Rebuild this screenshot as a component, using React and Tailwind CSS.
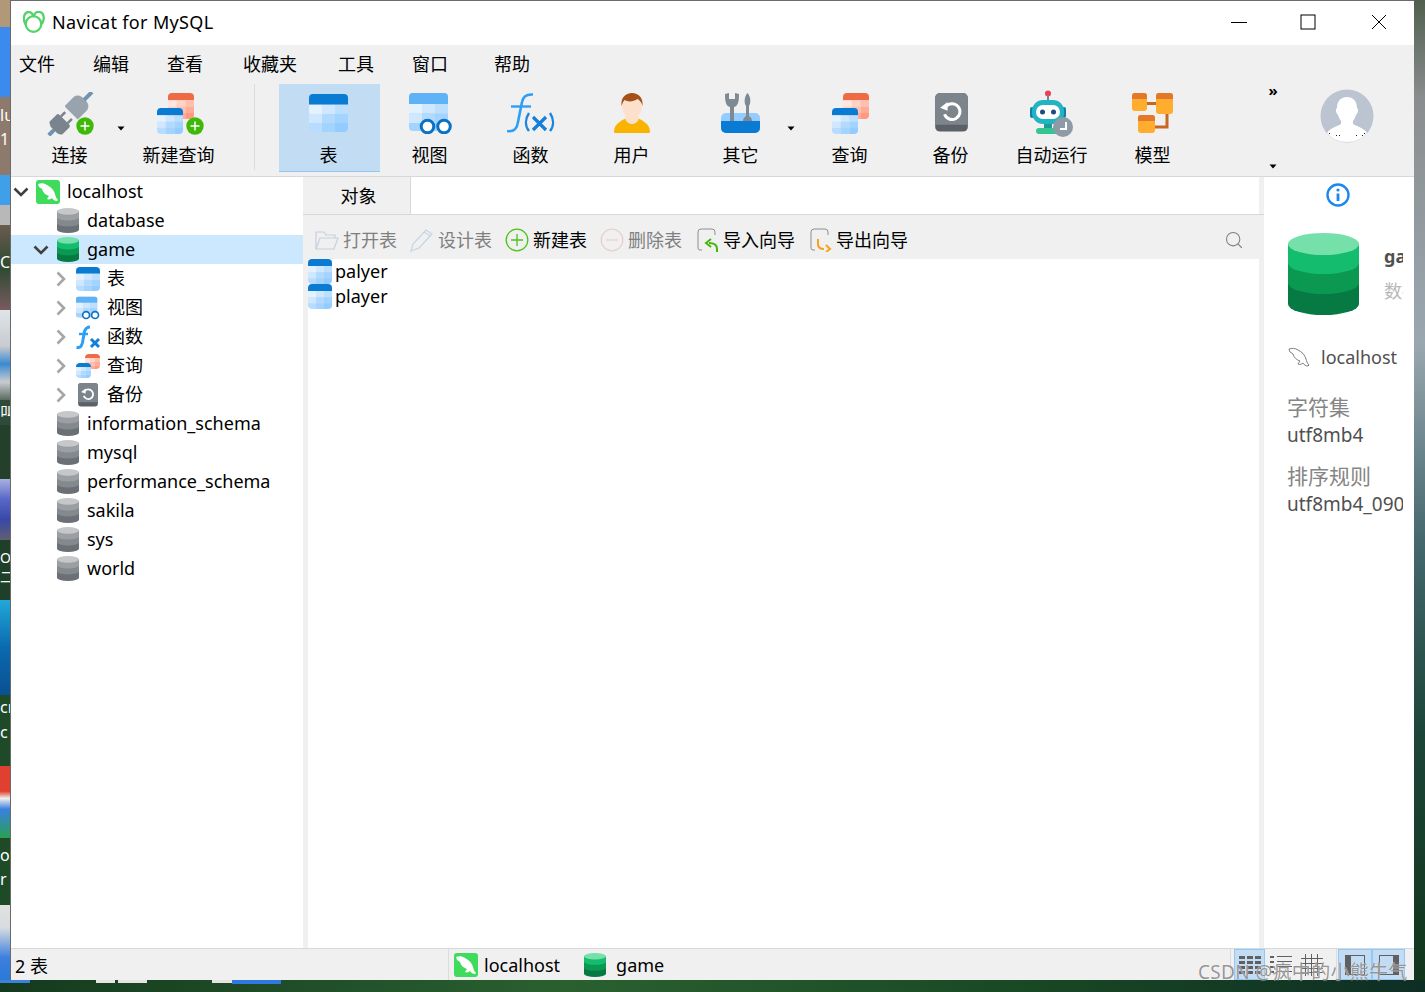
import { Search } from 'lucide-react';

const BLUE = {
  head: '#0a7bd3',
  cells: ['#e4f2ff', '#cfe7ff', '#bcdfff', '#cfe7ff', '#b2dafF', '#a3d3ff', '#b8dcff', '#a3d3ff', '#94ccff'],
};
const RED = {
  head: '#ee6b45',
  cells: ['#ffe6df', '#ffd2c6', '#ffbfae', '#ffd2c6', '#ffbfae', '#ffac96', '#ffbfae', '#ffac96', '#ff9a80'],
};

function TableIcon({ w = 39, h = 38, scheme = BLUE, className = '' }) {
  return (
    <svg width={w} height={h} viewBox="0 0 39 39" preserveAspectRatio="none" className={`rounded-[4px] shrink-0 ${className}`}>
      <rect width="39" height="11" fill={scheme.head} />
      {scheme.cells.map((c, i) => (
        <rect key={i} x={(i % 3) * 13} y={11 + Math.floor(i / 3) * 9.4} width="13.2" height="9.6" fill={c} />
      ))}
    </svg>
  );
}

function PlusBadge({ className = '' }) {
  return (
    <svg width="18" height="18" viewBox="0 0 18 18" className={className}>
      <circle cx="9" cy="9" r="8.7" fill="#3fb80a" />
      <path d="M9 4.5v9M4.5 9h9" stroke="#fff" strokeWidth="1.5" />
    </svg>
  );
}

function PlugIcon() {
  return (
    <svg width="48" height="44" viewBox="0 0 48 44" className="mt-[8px] ml-[2px]">
      <g transform="translate(23 22) rotate(-45)">
        <path d="M-30 -2h11v4h-11z" fill="#6f93b0" />
        <path d="M-20 -9h10a2 2 0 0 1 2 2v14a2 2 0 0 1 -2 2h-10a8 8 0 0 1 -2 -9a8 8 0 0 1 2 -9z" fill="#7a848e" />
        <path d="M-8 -6h6v2.5h-6zM-8 3.5h6v2.500h-6z" fill="#7a848e" />
        <path d="M3 -9.500h12a7 7 0 0 1 5 9.500a7 7 0 0 1 -5 9.500h-12a1.500 1.500 0 0 1 -1.500 -1.500v-16a1.500 1.500 0 0 1 1.500 -1.500z" fill="#99a3ad" />
        <path d="M20 -2h11v4h-11z" fill="#6f93b0" />
      </g>
      <circle cx="38" cy="34" r="8.700" fill="#3fb80a" />
      <path d="M38 29.500v9M33.500 34h9" stroke="#fff" strokeWidth="1.500" />
    </svg>
  );
}

function QueryIcon({ plus }) {
  return (
    <div className={`relative h-[41px] mt-[9px] ${plus ? 'w-[43px]' : 'w-[38px] ml-[3px]'}`}>
      <TableIcon w={26} h={26} scheme={RED} className="absolute left-[11px] top-0" />
      <TableIcon w={26} h={26} className="absolute left-0 top-[15px]" />
      {plus && <PlusBadge className="absolute left-[29px] top-[24px]" />}
    </div>
  );
}

function ViewIcon({ w = 44, h = 41, className = 'mt-[9px] ml-[3px]' }) {
  return (
    <svg width={w} height={h} viewBox="0 0 44 41" className={className}>
      <rect width="39" height="38" rx="4" fill="#a3d3ff" />
      <path d="M0 4a4 4 0 0 1 4 -4h31a4 4 0 0 1 4 4v7h-39z" fill="#5fb2f5" />
      <rect y="11" width="13" height="9.500" fill="#e4f2ff" />
      <rect x="13" y="11" width="13" height="9.500" fill="#cfe7ff" />
      <rect x="26" y="11" width="13" height="9.500" fill="#bcdfff" />
      <rect y="20.500" width="13" height="9.500" fill="#cfe7ff" />
      <rect x="13" y="20.500" width="13" height="9.500" fill="#b2daff" />
      <circle cx="18.500" cy="33.500" r="6.300" fill="#fff" stroke="#0a72c6" strokeWidth="3" />
      <circle cx="35" cy="33.500" r="6.300" fill="#fff" stroke="#0a72c6" strokeWidth="3" />
    </svg>
  );
}

function FuncIcon() {
  return (
    <svg width="48" height="40" viewBox="0 0 48 40" className="mt-[9px]">
      <path d="M0 38c7 1 10 -2 11 -9l4 -20c1 -6 5 -8 11 -7.500" fill="none" stroke="#2b9ff5" strokeWidth="2.600" />
      <path d="M4 13.500h20" stroke="#2b9ff5" strokeWidth="2.400" />
      <path d="M22 20c-4 6 -4 13 0 18M43 20c4 6 4 13 0 18" fill="none" stroke="#1a86e0" strokeWidth="2.400" />
      <path d="M26 24l13 13M39 24l-13 13" stroke="#1080dc" strokeWidth="3.200" />
    </svg>
  );
}

function UserIcon() {
  return (
    <svg width="38" height="41" viewBox="0 0 38 41" className="mt-[9px]">
      <path d="M1 39c0 -8 7 -11 12 -14h12c5 3 12 6 12 14a1 1 0 0 1 -1 1h-34a1 1 0 0 1 -1 -1z" fill="#f8b400" />
      <path d="M19 31c-4 0 -7 -3 -7 -7l1 -4h12l1 4c0 4 -3 7 -7 7z" fill="#fde0cb" />
      <ellipse cx="19" cy="13" rx="10" ry="12" fill="#fde0cb" />
      <path d="M8.500 13c-1 -8 4 -13 10.500 -13s11.500 5 10.500 13c-1 -4 -3 -6 -5 -7c-4 3 -10 3 -13 1c-1 1 -2 3 -3 6z" fill="#a5521a" />
    </svg>
  );
}

function ToolboxIcon() {
  return (
    <svg width="40" height="41" viewBox="0 0 40 41" className="mt-[9px]">
      <rect y="20" width="39" height="20" rx="5" fill="#94ccff" />
      <path d="M0 28h39v7a5 5 0 0 1 -5 5h-29a5 5 0 0 1 -5 -5z" fill="#0a7bd3" />
      <path d="M9 28v-14c-4 -1 -5 -5 -5 -13l4 -1v6h6v-6l4 1c0 8 -1 12 -5 13v14z" fill="#7d8993" />
      <path d="M22 28c0 -3 2 -4 3 -5v-10c-2 -3 -2 -9 1.500 -13c3.500 4 3.500 10 1.500 13v10c1 1 3 2 3 5z" fill="#7d8993" />
    </svg>
  );
}

function BackupIcon({ size = 33, className = 'mt-[9px] ml-[2px]' }) {
  return (
    <svg width={size} height={size * 1.2} viewBox="0 0 33 40" className={className}>
      <rect width="33" height="39" rx="5" fill="#5b6167" />
      <path d="M5 0h23a5 5 0 0 1 5 5v27h-33v-27a5 5 0 0 1 5 -5z" fill="#7c858c" />
      <path d="M11 13.500a8 8 0 1 1 -1.500 8" fill="none" stroke="#fff" strokeWidth="3" />
      <path d="M5 15l7.500 -6v9z" fill="#fff" />
    </svg>
  );
}

function RobotIcon() {
  return (
    <svg width="46" height="48" viewBox="0 0 46 48" className="mt-[6px] ml-[1px]">
      <circle cx="19" cy="3.500" r="3" fill="#ef3e56" />
      <rect x="18" y="5" width="2" height="6" fill="#6f8796" />
      <rect x="1" y="17" width="4" height="11" rx="2" fill="#1180a8" />
      <rect x="33" y="17" width="4" height="11" rx="2" fill="#1180a8" />
      <rect x="3" y="10" width="32" height="24" rx="11" fill="#23b4c4" />
      <rect x="7" y="15" width="24" height="14" rx="7" fill="#fff" />
      <circle cx="13.500" cy="22" r="2.500" fill="#1c4a86" />
      <circle cx="24.500" cy="22" r="2.500" fill="#1c4a86" />
      <rect x="15" y="34" width="8" height="4" fill="#1c9d94" />
      <rect x="7" y="38" width="26" height="6" rx="3" fill="#33c690" />
      <circle cx="34" cy="37" r="10" fill="#8e9aa6" />
      <path d="M37 32v7h-6" fill="none" stroke="#fff" strokeWidth="2" />
    </svg>
  );
}

function ModelIcon() {
  const box = (x, y, w, h) => (
    <g>
      <rect x={x} y={y} width={w} height={h} rx="3" fill="#ffad2e" />
      <path d={`M${x} ${y + 6}v-3a3 3 0 0 1 3 -3h${w - 6}a3 3 0 0 1 3 3v3z`} fill="#e3772a" />
    </g>
  );
  return (
    <svg width="42" height="41" viewBox="0 0 42 41" className="mt-[9px]">
      <path d="M15 10.500h10M35 20v14h-12" fill="none" stroke="#c9661f" strokeWidth="3" />
      {box(0, 0, 15, 18)}
      {box(24, 0, 17, 21)}
      {box(6, 22, 17, 18)}
    </svg>
  );
}

function Avatar() {
  return (
    <svg width="54" height="54" viewBox="0 0 54 54">
      <circle cx="27" cy="27" r="26.500" fill="#bcc4d1" />
      <path d="M27 8c7 0 10 5 10 11c2 1 1 5 -1 7c-1 3 -2 5 -3 6v3c5 3 11 4 14 9c-5 6 -12 9 -20 9s-15 -3 -20 -9c3 -5 9 -6 14 -9v-3c-1 -1 -2 -3 -3 -6c-2 -2 -3 -6 -1 -7c0 -6 3 -11 10 -11z" fill="#fff" />
      <path d="M9 44h1v1h-1zM16 46h1v1h-1zM19 46h1v1h-1zM36 46h1v1h-1zM42 46h1v1h-1zM44 44h1v1h-1z" fill="#222" />
    </svg>
  );
}

function Caret({ className = '' }) {
  return (
    <svg width="8" height="5" viewBox="0 0 8 5" className={className}>
      <path d="M0.500 0.500h7l-3.500 4z" fill="#000" />
    </svg>
  );
}

function Cylinder({ w = 22, h = 25, green = false, className = '' }) {
  const c = green
    ? ['#067a42', '#0b9850', '#14bd6e', '#76e0aa']
    : ['#6b7076', '#84898e', '#9b9fa3', '#c5c7c9'];
  return (
    <svg width={w} height={h} viewBox="0 0 71 82" preserveAspectRatio="none" className={`shrink-0 ${className}`}>
      <path d="M0 11v60a35.500 11 0 0 0 71 0v-60z" fill={c[0]} />
      <path d="M0 11v39a35.500 11 0 0 0 71 0v-39z" fill={c[1]} />
      <path d="M0 11v19a35.500 11 0 0 0 71 0v-19z" fill={c[2]} />
      <ellipse cx="35.500" cy="11" rx="35.500" ry="11" fill={c[3]} />
    </svg>
  );
}

const DOLPHIN = 'M2 4c3 -1 6 -1 9 1c4 2 7 5 8 9c0.500 2 1 4 3 6l-1 1c-2 0 -4 -1 -5 -3c-1 1 -3 2 -5 1l2 -3c-3 -1 -6 -3 -7 -7l-3 -2z';

function MysqlIcon() {
  return (
    <svg width="24" height="24" viewBox="0 0 24 24" className="rounded-[3px] shrink-0 bg-[#3fdb5c]">
      <path d={DOLPHIN} fill="#fff" />
    </svg>
  );
}

function TinyFx() {
  return (
    <svg width="24" height="24" viewBox="0 0 24 24" className="shrink-0">
      <path d="M0.500 22.500c4 0.500 5 -1 6 -5l2 -11c1 -3 2 -4.500 5.500 -4.500" fill="none" stroke="#2b9ff5" strokeWidth="3" />
      <path d="M3 9h9" stroke="#2b9ff5" strokeWidth="2.400" />
      <path d="M15 14l8 8M23 14l-8 8" stroke="#1080dc" strokeWidth="3" />
    </svg>
  );
}

function TinyView() {
  return <ViewIcon w={24} h={24} className="shrink-0" />;
}

function TinyQuery() {
  return (
    <div className="relative w-[24px] h-[24px] shrink-0">
      <TableIcon w={15} h={15} scheme={RED} className="absolute left-[9px] top-0" />
      <TableIcon w={15} h={15} className="absolute left-0 top-[9px]" />
    </div>
  );
}

function WindowButtons() {
  return (
    <div className="flex items-center">
      <svg width="16" height="16" viewBox="0 0 16 16" className="mr-[53px]"><path d="M0 8.500h16" stroke="#000" /></svg>
      <svg width="16" height="16" viewBox="0 0 16 16" className="mr-[55px]"><rect x="1" y="1" width="14" height="14" fill="none" stroke="#000" /></svg>
      <svg width="16" height="16" viewBox="0 0 16 16" className="mr-[27px]"><path d="M1 1l14 14M15 1l-14 14" stroke="#000" /></svg>
    </div>
  );
}

const MENU = [
  { t: '文件', c: 'ml-[8px]' },
  { t: '编辑', c: 'ml-[38px]' },
  { t: '查看', c: 'ml-[38px]' },
  { t: '收藏夹', c: 'ml-[40px]' },
  { t: '工具', c: 'ml-[41px]' },
  { t: '窗口', c: 'ml-[38px]' },
  { t: '帮助', c: 'ml-[46px]' },
];

function ToolItem({ label, active, flat, children }) {
  return (
    <div className={`w-[101px] h-[88px] flex flex-col items-center shrink-0 ${flat ? '' : 'pr-[2px]'} ${active ? 'bg-[#c1dcf3] border-b border-[#90c8f0]' : ''}`}>
      <div className="h-[56px] flex justify-center">{children}</div>
      <span className="text-[18px] leading-[28px] mt-[1px]">{label}</span>
    </div>
  );
}

function Toolbar() {
  return (
    <div className="h-[93px] flex border-b border-[#d8d8d8] bg-[#f0f0f0] shrink-0">
      <div className="flex pl-[8px]">
        <ToolItem flat label="连接"><PlugIcon /></ToolItem>
        <div className="w-[8px] shrink-0"><Caret className="mt-[42px] ml-[-3px]" /></div>
        <ToolItem flat label="新建查询"><QueryIcon plus /></ToolItem>
        <div className="w-[1px] h-[86px] bg-[#dcdcdc] ml-[25px] mr-[24px]" />
        <ToolItem label="表" active><TableIcon className="mt-[10px]" /></ToolItem>
        <ToolItem label="视图"><ViewIcon /></ToolItem>
        <ToolItem label="函数"><FuncIcon /></ToolItem>
        <ToolItem label="用户"><UserIcon /></ToolItem>
      </div>
      <div className="flex ml-[8px]">
        <ToolItem label="其它"><ToolboxIcon /></ToolItem>
        <div className="w-[8px] shrink-0"><Caret className="mt-[42px] ml-[-5px]" /></div>
        <ToolItem label="查询"><QueryIcon /></ToolItem>
        <ToolItem label="备份"><BackupIcon /></ToolItem>
        <ToolItem label="自动运行"><RobotIcon /></ToolItem>
        <ToolItem label="模型"><ModelIcon /></ToolItem>
      </div>
      <div className="w-[20px] ml-[59px] flex flex-col items-center">
        <span className="text-[15px] leading-[12px] font-bold">»</span>
        <Caret className="mt-[68px]" />
      </div>
      <div className="ml-[37px] mt-[5px]"><Avatar /></div>
    </div>
  );
}

function TreeChevron({ open }) {
  return (
    <svg width="18" height="18" viewBox="0 0 18 18" fill="none" className="shrink-0">
      {open ? (
        <path d="M2.500 5.500L9 12l6.500 -6.500" stroke="#404040" strokeWidth="2.600" />
      ) : (
        <path d="M5.500 2.500L12 9l-6.500 6.500" stroke="#a6a6a6" strokeWidth="2.600" />
      )}
    </svg>
  );
}

const DBS = ['information_schema', 'mysql', 'performance_schema', 'sakila', 'sys', 'world'];

function TreeRow({ indent, chevron, icon, label, active, gap = 'ml-[8px]' }) {
  return (
    <div className={`h-[29px] flex items-center shrink-0 ${indent} ${active ? 'bg-[#cce8ff]' : ''}`}>
      {chevron && <TreeChevron open={chevron === 'down'} />}
      {icon}
      <span className={`text-[18px] leading-[29px] whitespace-nowrap ${gap}`}>{label}</span>
    </div>
  );
}

function Sidebar() {
  return (
    <div className="w-[292px] shrink-0 flex flex-col bg-white">
      <TreeRow indent="pl-[1px]" chevron="down" gap="ml-[7px]" label="localhost" icon={<div className="ml-[6px]"><MysqlIcon /></div>} />
      <TreeRow indent="pl-[46px]" label="database" icon={<Cylinder />} />
      <TreeRow indent="pl-[21px]" chevron="down" active label="game" icon={<Cylinder green className="ml-[7px]" />} />
      <TreeRow indent="pl-[41px]" chevron="right" gap="ml-[7px]" label="表" icon={<TableIcon w={24} h={24} className="ml-[6px]" />} />
      <TreeRow indent="pl-[41px]" chevron="right" gap="ml-[7px]" label="视图" icon={<div className="ml-[6px] flex"><TinyView /></div>} />
      <TreeRow indent="pl-[41px]" chevron="right" gap="ml-[7px]" label="函数" icon={<div className="ml-[6px] flex"><TinyFx /></div>} />
      <TreeRow indent="pl-[41px]" chevron="right" gap="ml-[7px]" label="查询" icon={<div className="ml-[6px] flex"><TinyQuery /></div>} />
      <TreeRow indent="pl-[41px]" chevron="right" gap="ml-[7px]" label="备份" icon={<BackupIcon size={20} className="ml-[8px] mr-[2px]" />} />
      {DBS.map((d) => (
        <TreeRow key={d} indent="pl-[46px]" label={d} icon={<Cylinder />} />
      ))}
    </div>
  );
}

function FolderIcon() {
  return (
    <svg width="24" height="22" viewBox="0 0 24 22" fill="none" stroke="#c5d0da" strokeWidth="1.200">
      <path d="M1 20V3h8l2 3h9v3" />
      <path d="M1 20l4 -11h18l-4 11z" />
    </svg>
  );
}

function PencilIcon() {
  return (
    <svg width="24" height="24" viewBox="0 0 24 24" fill="none" stroke="#c5d5e2" strokeWidth="1.200">
      <path d="M1 23l2 -7l13 -14l6 4l-13 14z" />
      <path d="M14 4l6 4" />
    </svg>
  );
}

function CircleAction({ color, minus }) {
  return (
    <svg width="24" height="24" viewBox="0 0 24 24" fill="none" stroke={color} strokeWidth="1.300">
      <circle cx="12" cy="12" r="10.800" />
      <path d={minus ? 'M6 12h12' : 'M12 6v12M6 12h12'} />
    </svg>
  );
}

function WizardIcon({ color, flip }) {
  return (
    <svg width="24" height="24" viewBox="0 0 24 24" fill="none">
      <path d="M16 1h-11a3 3 0 0 0 -3 3v16a2 2 0 0 0 2 2h2M16 1a3 3 0 0 1 3 3v3" stroke="#8f8f8f" strokeWidth="1" />
      {flip ? (
        <path d="M9 11v5c0 3 2 5 6 5M17 17l4 4l-4 3" stroke={color} strokeWidth="2" />
      ) : (
        <path d="M21 24v-3c0 -4 -3 -6 -8 -6M15 11l-5 4l5 4" stroke={color} strokeWidth="2" />
      )}
    </svg>
  );
}

function ActionBtn({ icon, label, muted, gap, className = '' }) {
  return (
    <div className={`flex items-center shrink-0 ${className}`}>
      {icon}
      <span className={`text-[18px] leading-[26px] whitespace-nowrap ${gap} ${muted ? 'text-[#7f7f7f]' : 'text-black'}`}>{label}</span>
    </div>
  );
}

function Content() {
  return (
    <div className="w-[961px] shrink-0 flex flex-col bg-white">
      <div className="h-[38px] flex border-b border-[#d8d8d8] shrink-0">
        <div className="w-[108px] pl-[4px] bg-[#f0f0f0] border-r border-[#d8d8d8] text-center text-[18px] leading-[38px]">对象</div>
        <div className="ml-auto w-[5px] bg-[#f0f0f0]" />
      </div>
      <div className="flex flex-1 min-h-0">
        <div className="w-[5px] bg-[#f0f0f0] shrink-0" />
        <div className="flex-1 flex flex-col">
          <div className="h-[44px] bg-[#f0f0f0] flex items-center pt-[6px] pl-[7px] pr-[15px] shrink-0">
            <ActionBtn icon={<FolderIcon />} label="打开表" muted gap="ml-[4px]" />
            <ActionBtn icon={<PencilIcon />} label="设计表" muted gap="ml-[4px]" className="ml-[13px]" />
            <ActionBtn icon={<CircleAction color="#4cc417" />} label="新建表" gap="ml-[4px]" className="ml-[13px]" />
            <ActionBtn icon={<CircleAction color="#ead0cc" minus />} label="删除表" muted gap="ml-[4px]" className="ml-[13px]" />
            <ActionBtn icon={<WizardIcon color="#43b80c" />} label="导入向导" gap="ml-[3px]" className="ml-[14px]" />
            <ActionBtn icon={<WizardIcon color="#f8a21a" flip />} label="导出向导" gap="ml-[3px]" className="ml-[14px]" />
            <Search size={20} strokeWidth={1.300} className="text-[#808080] ml-auto" />
          </div>
          <div className="flex flex-col bg-white">
            {['palyer', 'player'].map((n) => (
              <div key={n} className="h-[25px] flex items-center">
                <TableIcon w={24} h={25} />
                <span className="text-[18px] leading-[25px] ml-[3px]">{n}</span>
              </div>
            ))}
          </div>
        </div>
        <div className="w-[5px] bg-[#f0f0f0] shrink-0" />
      </div>
    </div>
  );
}

function InfoPanel() {
  return (
    <div className="w-[150px] shrink-0 bg-white pl-[23px] overflow-hidden">
      <div className="w-[116px] overflow-hidden">
        <svg width="24" height="24" viewBox="0 0 24 24" className="mt-[6px] ml-[39px]">
          <circle cx="12" cy="12" r="10.500" fill="none" stroke="#1c87f0" strokeWidth="2.400" />
          <circle cx="12" cy="7" r="1.600" fill="#1c87f0" />
          <path d="M12 10.500v7.500" stroke="#1c87f0" strokeWidth="2.800" />
        </svg>
        <div className="flex mt-[26px]">
          <Cylinder green w={71} h={82} className="ml-[1px]" />
          <div className="ml-[25px] pt-[10px] flex flex-col">
            <span className="text-[18px] leading-[26px] font-bold text-[#505050]">game</span>
            <span className="text-[18px] leading-[26px] mt-[9px] text-[#b8b8b8] whitespace-nowrap">数据库</span>
          </div>
        </div>
        <div className="flex items-center mt-[30px] h-[24px]">
          <svg width="24" height="24" viewBox="0 0 24 24" className="shrink-0">
            <path d={DOLPHIN} fill="none" stroke="#808080" strokeWidth="1" />
          </svg>
          <span className="text-[18px] leading-[24px] ml-[10px] text-[#505050]">localhost</span>
        </div>
        <div className="mt-[24px] text-[21px] leading-[28px] text-[#858585]">字符集</div>
        <div className="text-[19px] leading-[28px] text-[#505050]">utf8mb4</div>
        <div className="mt-[13px] text-[21px] leading-[28px] text-[#858585] whitespace-nowrap">排序规则</div>
        <div className="text-[19px] leading-[28px] text-[#505050] whitespace-nowrap">utf8mb4_0900_ai_ci</div>
      </div>
    </div>
  );
}

function Grid3() {
  return (
    <svg width="22" height="20" viewBox="0 0 22 20" fill="#606060">
      {[0, 8, 16].map((x) => [1, 6, 11, 16].map((y) => <rect key={`${x}-${y}`} x={x} y={y} width="6" height="3" />))}
    </svg>
  );
}

function ListLines() {
  return (
    <svg width="22" height="20" viewBox="0 0 22 20" fill="#606060">
      {[1, 6, 11, 16].map((y) => (
        <g key={y}>
          <rect x="0" y={y} width="4" height="2" />
          <rect x="7" y={y} width="15" height="1" />
        </g>
      ))}
    </svg>
  );
}

function GridLines() {
  return (
    <svg width="22" height="22" viewBox="0 0 22 22" fill="none" stroke="#606060">
      <path d="M0 4.500h22M0 9.500h22M0 14.500h22M0 18.500h22M4.500 0v22M10.500 0v22M16.500 0v22" />
    </svg>
  );
}

function PaneIcon({ right }) {
  return (
    <svg width="20" height="20" viewBox="0 0 20 20">
      <rect x="0.500" y="0.500" width="19" height="19" fill="none" stroke="#606060" />
      <rect x={right ? 14 : 1} y="1" width="5" height="18" fill="#606060" />
    </svg>
  );
}

function StatusBar() {
  const on = 'bg-[#c1dcf3] border border-[#90c8f8]';
  return (
    <div className="h-[32px] bg-[#f0f0f0] border-t border-[#d8d8d8] flex shrink-0">
      <div className="w-[438px] pl-[4px] text-[18px] leading-[34px] border-r border-[#dcdcdc] shrink-0">2 表</div>
      <div className="flex items-center pl-[5px]">
        <MysqlIcon />
        <span className="text-[18px] leading-[32px] ml-[6px]">localhost</span>
        <Cylinder green w={22} h={24} className="ml-[24px]" />
        <span className="text-[18px] leading-[32px] ml-[10px]">game</span>
      </div>
      <div className="ml-auto flex items-center pr-[9px]">
        <div className="w-[1px] h-[31px] bg-[#dcdcdc] mr-[3px]" />
        <div className={`w-[31px] h-[31px] flex items-center justify-center ${on}`}><Grid3 /></div>
        <div className="w-[31px] h-[31px] flex items-center justify-center"><ListLines /></div>
        <div className="w-[31px] h-[31px] flex items-center justify-center"><GridLines /></div>
        <div className="w-[1px] h-[31px] bg-[#dcdcdc] ml-[9px] mr-[1px]" />
        <div className={`w-[34px] h-[31px] flex items-center justify-center ${on}`}><PaneIcon /></div>
        <div className={`w-[33px] h-[31px] flex items-center justify-center ${on}`}><PaneIcon right /></div>
      </div>
    </div>
  );
}

function LeftDesktop() {
  return (
    <div className="w-[11px] shrink-0 flex flex-col overflow-hidden text-white text-[16px]">
      <div className="h-[27px] shrink-0 bg-[#b09878]" />
      <div className="h-[70px] shrink-0 bg-[#3d8aee]" />
      <div className="h-[78px] shrink-0 bg-[#8d7a6c] pt-[6px] leading-[24px]">lu<br />1</div>
      <div className="h-[30px] shrink-0 bg-[#3f9fe8]" />
      <div className="h-[20px] shrink-0 bg-[#b8b8b8]" />
      <div className="h-[85px] shrink-0 bg-[linear-gradient(#6b5a50,#2c4a30_50%,#7a5a60)] pt-[25px] leading-[24px]">CE</div>
      <div className="h-[90px] shrink-0 bg-[linear-gradient(#dfe4e8,#c8ccd0_40%,#3a8ad0_60%,#c8ccd0_80%,#5a6a60)]" />
      <div className="h-[25px] shrink-0 bg-[#2f4a38] leading-[25px]">叫</div>
      <div className="h-[54px] shrink-0 bg-[#24402a]" />
      <div className="h-[61px] shrink-0 bg-[linear-gradient(#aab0e0,#5868c8,#3848a8,#606070)]" />
      <div className="h-[60px] shrink-0 bg-[#1f3f28] pt-[8px] text-[14px] leading-[19px]">O<br />二</div>
      <div className="h-[95px] shrink-0 bg-[linear-gradient(#22a8d8,#0a6ab0,#0a5090)]" />
      <div className="h-[71px] shrink-0 bg-[#1e4a28] leading-[25px]">cr<br />c</div>
      <div className="h-[72px] shrink-0 bg-[linear-gradient(#e04030_35%,#f0f0f0_45%,#3a80e0_60%,#28a050)]" />
      <div className="h-[67px] shrink-0 bg-[#1e4a28] pt-[5px] leading-[24px]">o<br />r</div>
      <div className="flex-1 bg-[linear-gradient(#e0e0e0,#d8dce0_30%,#3d80dd_70%,#2a78d8)]" />
    </div>
  );
}

export default function App() {
  return (
    <div className="relative w-[1425px] h-[992px] overflow-hidden bg-[#12361c] text-black font-['Noto_Sans','Noto_Sans_CJK_SC',sans-serif]">
      <div className="flex h-[980px]">
        <LeftDesktop />
        <div className="w-[1404px] shrink-0 flex flex-col bg-white border-t border-l border-[#6a6a6a] -ml-px">
          <div className="h-[44px] flex items-center justify-between shrink-0 bg-white pb-[2px]">
            <div className="flex items-center pl-[12px]">
              <svg width="22" height="22" viewBox="0 0 22 22" fill="none" stroke="#54d36a" strokeWidth="2.300">
                <circle cx="10.500" cy="13" r="7.800" />
                <path d="M3 14c-4 -6 -2 -13 3 -13c3 0 4 3 4.500 5c0.500 -3 2.500 -6 6.500 -5c4 1 5 7 2 12" />
              </svg>
              <span className="text-[18px] leading-[22px] ml-[7px] tracking-[0.35px]">Navicat for MySQL</span>
            </div>
            <WindowButtons />
          </div>
          <div className="h-[39px] bg-[#f0f0f0] flex items-center shrink-0">
            {MENU.map((m) => (
              <span key={m.t} className={`text-[18px] leading-[39px] ${m.c}`}>{m.t}</span>
            ))}
          </div>
          <Toolbar />
          <div className="flex flex-1 min-h-0">
            <Sidebar />
            <Content />
            <InfoPanel />
          </div>
          <StatusBar />
        </div>
        <div className="w-[11px] shrink-0 bg-[linear-gradient(#50604f,#8a8d8e_10%,#9aa7b0_35%,#45686e_55%,#1c4438_75%,#12361c)]" />
      </div>
      <div className="h-[12px] flex items-start bg-[linear-gradient(90deg,#143a1e,#2a6030_40%,#1a4a24_70%,#0e2e24)]">
        <div className="w-[30px] h-[3px] bg-[#3d80dd] shrink-0" />
        <div className="w-[19px] h-[3px] bg-[#e4e4e4] ml-[66px] shrink-0" />
        <div className="w-[29px] h-[3px] bg-[#e4e4e4] ml-[3px] shrink-0" />
        <div className="w-[20px] h-[3px] bg-[#e4e4e4] ml-[65px] shrink-0" />
        <div className="w-[49px] h-[4px] bg-[#2f78e0] shrink-0" />
      </div>
      <span className="absolute left-[1198px] top-[960px] text-[19px] leading-[24px] tracking-[0.3px] text-[#7a7a7a]/80 [text-shadow:0_0_1px_#fff] whitespace-nowrap">CSDN @疯中的小熊牛气</span>
    </div>
  );
}
